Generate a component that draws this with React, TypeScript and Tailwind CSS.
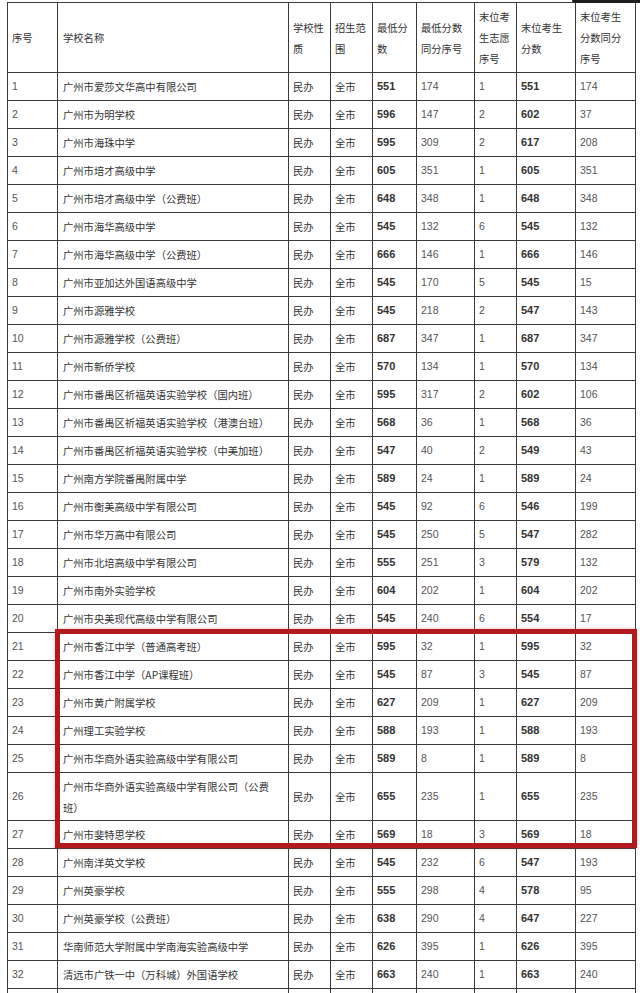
import React from "react";

type Row = [string, React.ReactNode, string, string, string, string, string, string, string, number?];

const rows: Row[] = [
  ["1", "广州市爱莎文华高中有限公司", "民办", "全市", "551", "174", "1", "551", "174"],
  ["2", "广州市为明学校", "民办", "全市", "596", "147", "2", "602", "37"],
  ["3", "广州市海珠中学", "民办", "全市", "595", "309", "2", "617", "208"],
  ["4", "广州市培才高级中学", "民办", "全市", "605", "351", "1", "605", "351"],
  ["5", "广州市培才高级中学（公费班）", "民办", "全市", "648", "348", "1", "648", "348"],
  ["6", "广州市海华高级中学", "民办", "全市", "545", "132", "6", "545", "132"],
  ["7", "广州市海华高级中学（公费班）", "民办", "全市", "666", "146", "1", "666", "146"],
  ["8", "广州市亚加达外国语高级中学", "民办", "全市", "545", "170", "5", "545", "15"],
  ["9", "广州市源雅学校", "民办", "全市", "545", "218", "2", "547", "143"],
  ["10", "广州市源雅学校（公费班）", "民办", "全市", "687", "347", "1", "687", "347"],
  ["11", "广州市新侨学校", "民办", "全市", "570", "134", "1", "570", "134"],
  ["12", "广州市番禺区祈福英语实验学校（国内班）", "民办", "全市", "595", "317", "2", "602", "106"],
  ["13", "广州市番禺区祈福英语实验学校（港澳台班）", "民办", "全市", "568", "36", "1", "568", "36"],
  ["14", "广州市番禺区祈福英语实验学校（中美加班）", "民办", "全市", "547", "40", "2", "549", "43"],
  ["15", "广州南方学院番禺附属中学", "民办", "全市", "589", "24", "1", "589", "24"],
  ["16", "广州市衡美高级中学有限公司", "民办", "全市", "545", "92", "6", "546", "199"],
  ["17", "广州市华万高中有限公司", "民办", "全市", "545", "250", "5", "547", "282"],
  ["18", "广州市北培高级中学有限公司", "民办", "全市", "555", "251", "3", "579", "132"],
  ["19", "广州市南外实验学校", "民办", "全市", "604", "202", "1", "604", "202"],
  ["20", "广州市央美现代高级中学有限公司", "民办", "全市", "545", "240", "6", "554", "17"],
  ["21", "广州市香江中学（普通高考班）", "民办", "全市", "595", "32", "1", "595", "32"],
  ["22", "广州市香江中学（AP课程班）", "民办", "全市", "545", "87", "3", "545", "87"],
  ["23", "广州市黄广附属学校", "民办", "全市", "627", "209", "1", "627", "209"],
  ["24", "广州理工实验学校", "民办", "全市", "588", "193", "1", "588", "193"],
  ["25", "广州市华商外语实验高级中学有限公司", "民办", "全市", "589", "8", "1", "589", "8"],
  [
    "26",
    <>
      广州市华商外语实验高级中学有限公司（公费
      <br />
      班）
    </>,
    "民办",
    "全市",
    "655",
    "235",
    "1",
    "655",
    "235",
    48,
  ],
  ["27", "广州市斐特思学校", "民办", "全市", "569", "18", "3", "569", "18"],
  ["28", "广州南洋英文学校", "民办", "全市", "545", "232", "6", "547", "193"],
  ["29", "广州英豪学校", "民办", "全市", "555", "298", "4", "578", "95"],
  ["30", "广州英豪学校（公费班）", "民办", "全市", "638", "290", "4", "647", "227"],
  ["31", "华南师范大学附属中学南海实验高级中学", "民办", "全市", "626", "395", "1", "626", "395"],
  ["32", "清远市广铁一中（万科城）外国语学校", "民办", "全市", "663", "240", "1", "663", "240"],
  ["", "", "", "", "", "", "", "", ""],
];

const grid =
  "grid grid-cols-[50px_231px_42px_42px_44px_58px_42px_59px_60px]";
const cell =
  "border-r border-b border-[#3a3a3a] flex items-center pl-[4px] overflow-hidden";
const cjk = "font-['Noto_Sans_CJK_SC',sans-serif] text-[10.3px] text-[#333]";
const numN = "font-['Liberation_Sans',sans-serif] text-[10.5px] text-[#555]";
const numB = "font-['Liberation_Sans',sans-serif] text-[11px] font-bold text-[#333]";

export default function App() {
  return (
    <div className="relative w-[640px] h-[993px] overflow-hidden bg-white">
      <div className="absolute right-0 top-0 w-[68px] h-[3px] bg-[#1e1e1e] rounded-bl-[3px]" />
      <div className="ml-[7px] mt-[2px] w-[630px] border-l border-t border-[#3a3a3a]">
        <div className={`${grid} h-[70px]`}>
          {[
            ["序号"],
            ["学校名称"],
            ["学校性", "质"],
            ["招生范", "围"],
            ["最低分", "数"],
            ["最低分数", "同分序号"],
            ["末位考", "生志愿", "序号"],
            ["末位考生", "分数"],
            ["末位考生", "分数同分", "序号"],
          ].map((lines, i) => (
            <div
              key={i}
              className={`${cell} ${cjk} leading-[21px] ${i === 1 ? "pl-[5px]" : ""}`}
            >
              <div>
                {lines.map((l, j) => (
                  <div key={j} className="whitespace-nowrap">
                    {l}
                  </div>
                ))}
              </div>
            </div>
          ))}
        </div>
        {rows.map((r, idx) => {
          const h = r[9] === 48 ? "h-[48px]" : "h-[28px]";
          return (
            <div key={idx} className={`${grid} ${h}`}>
              <div className={`${cell} ${numN}`}>{r[0]}</div>
              <div className={`${cell} ${cjk} pl-[5px] leading-[21px]`}>
                <div className="whitespace-nowrap">{r[1]}</div>
              </div>
              <div className={`${cell} ${cjk}`}>{r[2]}</div>
              <div className={`${cell} ${cjk}`}>{r[3]}</div>
              <div className={`${cell} ${numB}`}>{r[4]}</div>
              <div className={`${cell} ${numN}`}>{r[5]}</div>
              <div className={`${cell} ${numN}`}>{r[6]}</div>
              <div className={`${cell} ${numB}`}>{r[7]}</div>
              <div className={`${cell} ${numN}`}>{r[8]}</div>
            </div>
          );
        })}
      </div>
      <div className="absolute left-[55px] top-[629px] w-[582px] h-[219px] border-[5px] border-[#b3181c] shadow-[0_0_4px_rgba(200,60,60,0.35)]" />
    </div>
  );
}
